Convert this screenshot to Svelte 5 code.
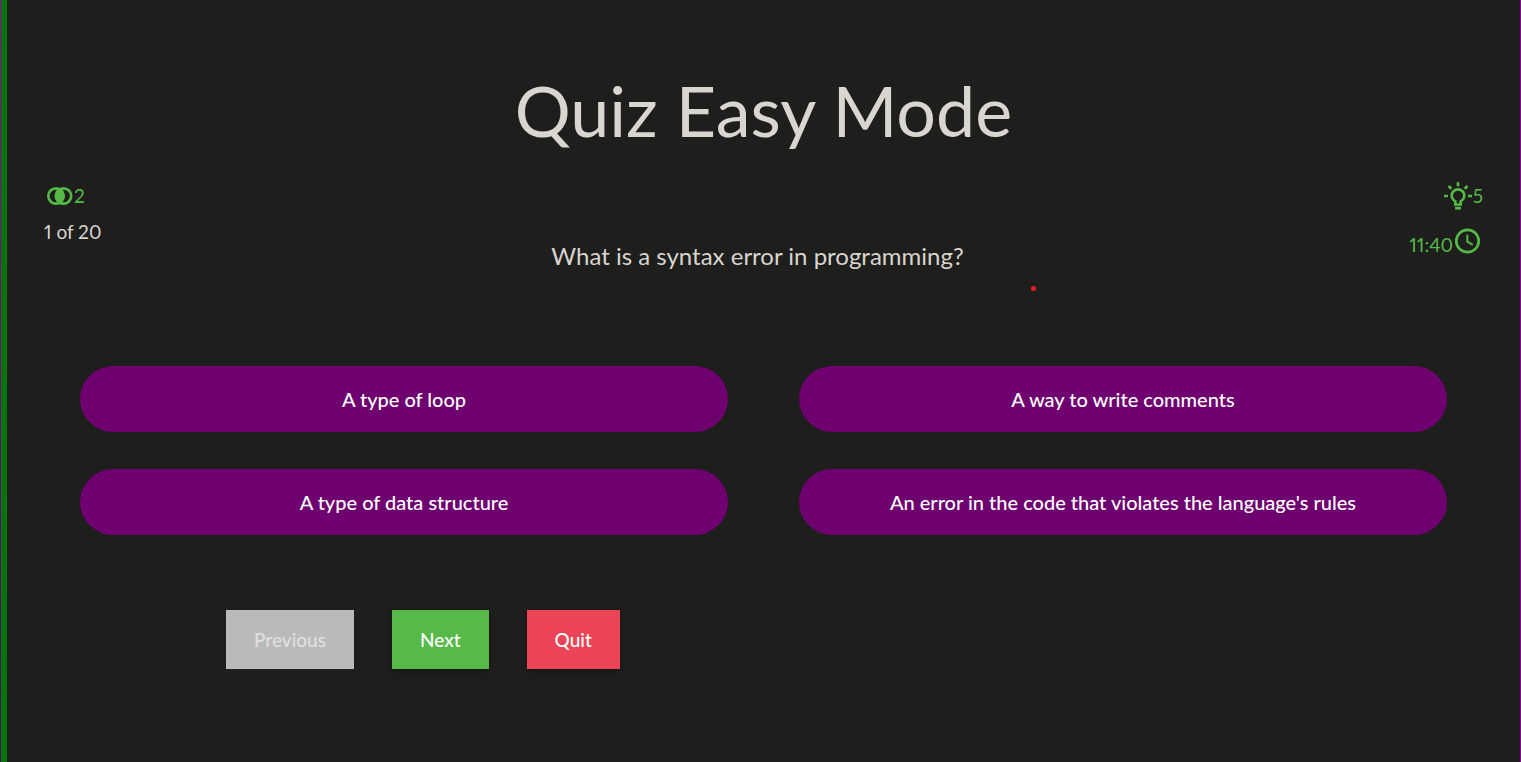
<script>
  let answers = [
    'A type of loop',
    'A way to write comments',
    'A type of data structure',
    "An error in the code that violates the language's rules",
  ];
</script>

<div class="page">
  <main>
    <h1>Quiz Easy Mode</h1>

    <section class="info">
      <div class="side">
        <div class="stat">
          <svg width="30" height="30" viewBox="0 0 30 30" fill="none" stroke="currentColor" stroke-width="2.7" aria-hidden="true">
            <circle cx="12" cy="15" r="7.7" />
            <circle cx="19.500" cy="15" r="7.7" />
            <path d="M15.750 8.300a7.700 7.700 0 0 1 0 13.400 7.700 7.700 0 0 1 0-13.400z" fill="currentColor" stroke="none" />
          </svg>
          <span>2</span>
        </div>
        <p class="count">1 of 20</p>
      </div>

      <h2>What is a syntax error in programming?</h2>

      <div class="side right">
        <div class="stat">
          <svg width="30" height="30" viewBox="0 0 30 30" fill="none" stroke="currentColor" stroke-width="2.7" aria-hidden="true">
            <path d="M12.300 23.500v-3.200a6.300 6.300 0 1 1 5.400 0v3.200zM12 27.200h6M15 1.200v4M1 15h4M25 15h4M5.500 5l2.800 2.800M24.500 5l-2.800 2.800" />
          </svg>
          <span>5</span>
        </div>
        <div class="stat time">
          <span>11:40</span>
          <svg width="30" height="30" viewBox="0 0 30 30" fill="none" stroke="currentColor" aria-hidden="true">
            <circle cx="14.500" cy="15" r="11.200" stroke-width="2.700" />
            <path d="M14.300 8.800v6.800l5.500 3.200" stroke-width="2" />
          </svg>
        </div>
      </div>
      <i class="dot"></i>
    </section>

    <div class="answers">
      {#each answers as answer}
        <button class="answer">{answer}</button>
      {/each}
    </div>

    <div class="actions">
      <button class="previous" disabled>Previous</button>
      <button class="next">Next</button>
      <button class="quit">Quit</button>
    </div>
  </main>
</div>

<style>
  :global(body) {
    background: #1e1e1c;
  }
  .page {
    box-sizing: border-box;
    min-height: 100vh;
    padding-left: 1px;
    border-right: 1px solid #90009a;
    background: linear-gradient(#a000a8, #4a1050) left / 1px 100% no-repeat;
    color: #d9d5cf;
    font-family: Lato, sans-serif;
    font-size: 19px;
    line-height: 24px;
    font-variant-numeric: proportional-nums;
  }
  main {
    box-sizing: border-box;
    min-height: 100vh;
    border-left: 6px solid #00750a;
    padding: 68px 37px 0;
  }
  h1 {
    margin: 0;
    font-size: 70px;
    line-height: 84px;
    font-weight: 400;
    text-align: center;
  }
  .info {
    position: relative;
    display: grid;
    grid-template-columns: 1fr auto 1fr;
    margin-top: 29px;
    min-height: 116px;
  }
  .stat {
    display: flex;
    align-items: center;
    height: 30px;
    color: #56b947;
  }
  .count {
    margin: 9px 0 0;
  }
  h2 {
    margin: 60px 12px 0 0;
    font-size: 24px;
    line-height: 30px;
    font-weight: 400;
  }
  .right {
    display: flex;
    flex-direction: column;
    align-items: flex-end;
  }
  .time {
    margin-top: 15px;
  }
  .time span {
    padding-top: 8px;
  }
  .dot {
    position: absolute;
    top: 105px;
    left: 987px;
    width: 5px;
    height: 5px;
    border-radius: 50%;
    background: #f01c24;
  }
  .answers {
    display: grid;
    grid-template-columns: 1fr 1fr;
    gap: 37px 71px;
    margin: 69px 36px 0;
  }
  button {
    border: 0;
    color: #fff;
    font: inherit;
    font-weight: 500;
  }
  .answer {
    height: 66px;
    border-radius: 33px;
    background: #6e006f;
    font-size: 20px;
  }
  .actions {
    display: flex;
    gap: 38px;
    margin: 75px 0 0 182px;
  }
  .actions button {
    height: 59px;
    padding: 0 28px;
    box-shadow: 0 2px 4px rgba(0, 0, 0, 0.3);
  }
  .actions .previous {
    background: #bababa;
    color: #e0e0e0;
    box-shadow: none;
  }
  .actions .next {
    background: #57b947;
  }
  .actions .quit {
    background: #eb4456;
  }
</style>
